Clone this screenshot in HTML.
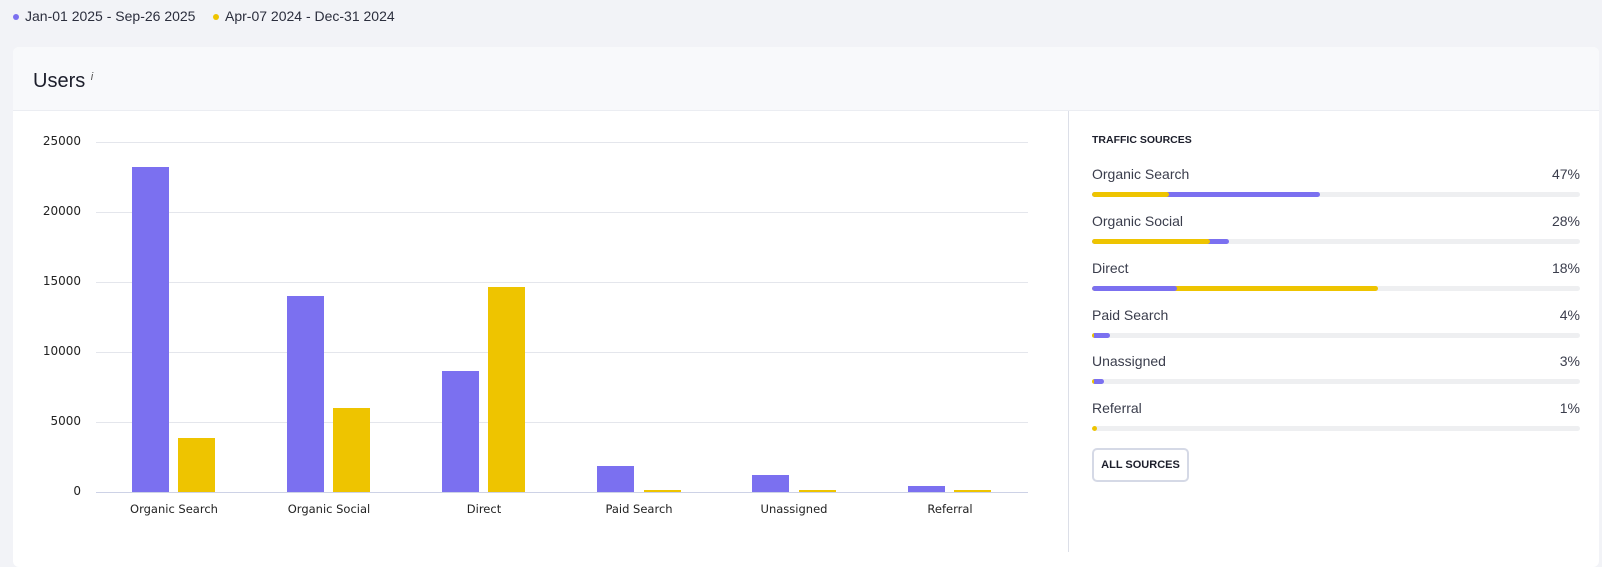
<!DOCTYPE html>
<html><head><meta charset="utf-8"><style>
*{margin:0;padding:0;box-sizing:border-box}
body{width:1602px;height:552px;background:#f2f3f7;font-family:"Liberation Sans",sans-serif;position:relative;overflow:hidden;color:#1f2130}
.abs{position:absolute}
.leg{top:8px;font-size:14px;color:#2b2e3d}
.dot{width:6px;height:6px;border-radius:50%;display:inline-block;position:absolute}
.card{left:13px;top:47px;width:1586px;height:520px;background:#fff;border-radius:6px;overflow:hidden}
.hdr{left:0;top:0;width:100%;height:64px;background:#f8f9fb;border-bottom:1px solid #ebedf2}
.grid{position:absolute;left:96px;width:932px;height:1px;background:#e4e6ec}
.ylab{position:absolute;right:1521px;font-family:"DejaVu Sans",sans-serif;font-size:12px;color:#222;text-align:right}
.bar{position:absolute;width:37px}
.p{background:#7b70f0}.y{background:#eec400}
.xl{position:absolute;top:502px;font-family:"DejaVu Sans",sans-serif;font-size:11.5px;color:#222;width:150px;text-align:center}
.row{position:absolute;left:1092px;width:488px;font-size:14px;color:#3a3d4c}
.row .pc{position:absolute;right:0;top:0}
.trk{position:absolute;left:0;top:26px;width:488px;height:5px;background:#eeeff1;border-radius:3px;overflow:hidden}
.seg{position:absolute;top:0;height:5px;border-radius:3px}
</style></head><body>
<span class="dot abs" style="left:13px;top:14px;background:#7b70f0"></span>
<div class="abs leg" style="left:25px">Jan-01 2025 - Sep-26 2025</div>
<span class="dot abs" style="left:213px;top:14px;background:#eec400"></span>
<div class="abs leg" style="left:225px">Apr-07 2024 - Dec-31 2024</div>

<div class="abs card">
 <div class="abs hdr"><div class="abs" style="left:20px;top:23px;font-size:20px;color:#1c1e2b">Users <i style="font-size:11px;vertical-align:top;position:relative;top:1px;color:#555">i</i></div></div>
</div>
<div class="abs" style="left:1068px;top:111px;width:1px;height:441px;background:#dcdfe8"></div>

<div class="grid" style="top:142px"></div>
<div class="grid" style="top:212px"></div>
<div class="grid" style="top:282px"></div>
<div class="grid" style="top:352px"></div>
<div class="grid" style="top:422px"></div>
<div class="grid" style="top:492px;background:#cdd2e6"></div>
<div class="ylab" style="top:134px">25000</div>
<div class="ylab" style="top:204px">20000</div>
<div class="ylab" style="top:274px">15000</div>
<div class="ylab" style="top:344px">10000</div>
<div class="ylab" style="top:414px">5000</div>
<div class="ylab" style="top:484px">0</div>

<div class="bar p" style="left:132px;top:167px;height:325px"></div>
<div class="bar y" style="left:178px;top:438px;height:54px"></div>
<div class="bar p" style="left:287px;top:296px;height:196px"></div>
<div class="bar y" style="left:333px;top:408px;height:84px"></div>
<div class="bar p" style="left:442px;top:371px;height:121px"></div>
<div class="bar y" style="left:488px;top:287px;height:205px"></div>
<div class="bar p" style="left:597px;top:466px;height:26px"></div>
<div class="bar y" style="left:644px;top:490px;height:2px"></div>
<div class="bar p" style="left:752px;top:475px;height:17px"></div>
<div class="bar y" style="left:799px;top:490px;height:2px"></div>
<div class="bar p" style="left:908px;top:486px;height:6px"></div>
<div class="bar y" style="left:954px;top:490px;height:2px"></div>

<div class="xl" style="left:99px">Organic Search</div>
<div class="xl" style="left:254px">Organic Social</div>
<div class="xl" style="left:409px">Direct</div>
<div class="xl" style="left:564px">Paid Search</div>
<div class="xl" style="left:719px">Unassigned</div>
<div class="xl" style="left:875px">Referral</div>

<div class="abs" style="left:1092px;top:134px;font-size:10.5px;font-weight:bold;color:#1c1e2b">TRAFFIC SOURCES</div>

<div class="row" style="top:166px">Organic Search<span class="pc">47%</span><div class="trk"><div class="seg p" style="left:0;width:228px"></div><div class="seg y" style="left:0;width:77px"></div></div></div>
<div class="row" style="top:213px">Organic Social<span class="pc">28%</span><div class="trk"><div class="seg p" style="left:0;width:137px"></div><div class="seg y" style="left:0;width:118px"></div></div></div>
<div class="row" style="top:260px">Direct<span class="pc">18%</span><div class="trk"><div class="seg y" style="left:0;width:286px"></div><div class="seg p" style="left:0;width:85px"></div></div></div>
<div class="row" style="top:307px">Paid Search<span class="pc">4%</span><div class="trk"><div class="seg p" style="left:0;width:18px"></div><div class="seg y" style="left:0;width:2px"></div></div></div>
<div class="row" style="top:353px">Unassigned<span class="pc">3%</span><div class="trk"><div class="seg p" style="left:0;width:12px"></div><div class="seg y" style="left:0;width:2px"></div></div></div>
<div class="row" style="top:400px">Referral<span class="pc">1%</span><div class="trk"><div class="seg y" style="left:0;width:5px"></div></div></div>

<div class="abs" style="left:1092px;top:448px;width:97px;height:34px;border:2px solid #d5d9e6;border-radius:5px;font-size:11px;font-weight:bold;color:#1c1e2b;text-align:center;line-height:30px;background:#fff">ALL SOURCES</div>
</body></html>
